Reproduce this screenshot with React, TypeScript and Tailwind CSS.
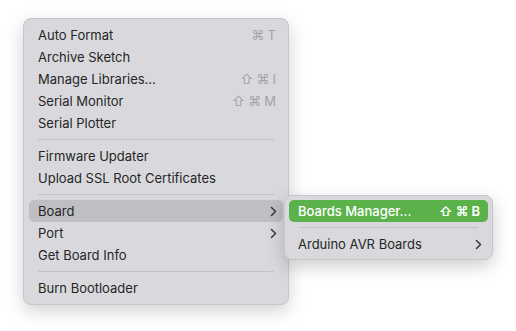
import React from "react";

// ---------------------------------------------------------------------------
// Types
// ---------------------------------------------------------------------------
type MenuItem =
  | { kind: "item"; label: string; keys?: string[]; submenu?: boolean; active?: boolean }
  | { kind: "sep" };

const MAIN_ITEMS: MenuItem[] = [
  { kind: "item", label: "Auto Format", keys: ["⌘", "T"] },
  { kind: "item", label: "Archive Sketch" },
  { kind: "item", label: "Manage Libraries...", keys: ["⇧", "⌘", "I"] },
  { kind: "item", label: "Serial Monitor", keys: ["⇧", "⌘", "M"] },
  { kind: "item", label: "Serial Plotter" },
  { kind: "sep" },
  { kind: "item", label: "Firmware Updater" },
  { kind: "item", label: "Upload SSL Root Certificates" },
  { kind: "sep" },
  { kind: "item", label: "Board", submenu: true, active: true },
  { kind: "item", label: "Port", submenu: true },
  { kind: "item", label: "Get Board Info" },
  { kind: "sep" },
  { kind: "item", label: "Burn Bootloader" },
];

function Chevron({ className }: { className?: string }) {
  return (
    <svg width="7" height="11" viewBox="0 0 7 11" className={className} fill="none">
      <path d="M1.5 1.5 L5.5 5.5 L1.5 9.5" stroke="currentColor" strokeWidth="1.6" strokeLinecap="round" strokeLinejoin="round" />
    </svg>
  );
}

function Keys({ keys, className }: { keys: string[]; className: string }) {
  return (
    <span className={`flex items-center gap-[3px] ${className}`}>
      {keys.map((k, i) => (
        <span key={i}>{k}</span>
      ))}
    </span>
  );
}

function Separator() {
  return (
    <div className="h-[11px] flex items-center px-[14px]">
      <div className="h-px w-full bg-[#c3c3c7]" />
    </div>
  );
}

export default function App() {
  return (
    <div
      className="w-[516px] h-[331px] bg-white relative text-[13px] text-[#262626]"
      style={{ fontFamily: "Inter, 'Liberation Sans', 'DejaVu Sans', sans-serif" }}
    >
      <div className="pt-[18px] pl-[23px]">
        {/* Main menu */}
        <div className="w-[266px] rounded-[8px] bg-[#d9d9dd] border border-[#c6c6ca] shadow-[0_6px_18px_rgba(0,0,0,0.18)] py-[5px]">
          {MAIN_ITEMS.map((item, i) =>
            item.kind === "sep" ? (
              <Separator key={i} />
            ) : (
              <div
                key={i}
                className={`mx-[5px] h-[22px] rounded-[5px] pl-[9px] pr-[7px] pt-[2px] flex items-center justify-between ${
                  item.active ? "bg-[#bfbfc3]" : ""
                }`}
              >
                <span>{item.label}</span>
                {item.keys && <Keys keys={item.keys} className="text-[#a3a3a7]" />}
                {item.submenu && <Chevron className="-mr-[1px] mb-[2px] text-[#3a3a3a]" />}
              </div>
            ),
          )}
        </div>
      </div>

      {/* Board submenu */}
      <div className="absolute left-[284px] top-[195px] w-[209px] rounded-[8px] bg-[#d9d9dd] border border-[#c6c6ca] shadow-[0_6px_18px_rgba(0,0,0,0.2)] py-[4px]">
        <div className="mx-[4px] h-[22px] rounded-[5px] bg-[#5bb24b] pl-[9px] pr-[8px] pt-[2px] flex items-center justify-between text-white font-medium">
          <span>Boards Manager...</span>
          <Keys keys={["⇧", "⌘", "B"]} className="font-semibold" />
        </div>
        <Separator />
        <div className="mx-[4px] h-[22px] pl-[9px] pr-[8px] pt-[2px] flex items-center justify-between">
          <span>Arduino AVR Boards</span>
          <Chevron className="-mr-[2px] mb-[2px] text-[#3a3a3a]" />
        </div>
      </div>
    </div>
  );
}
